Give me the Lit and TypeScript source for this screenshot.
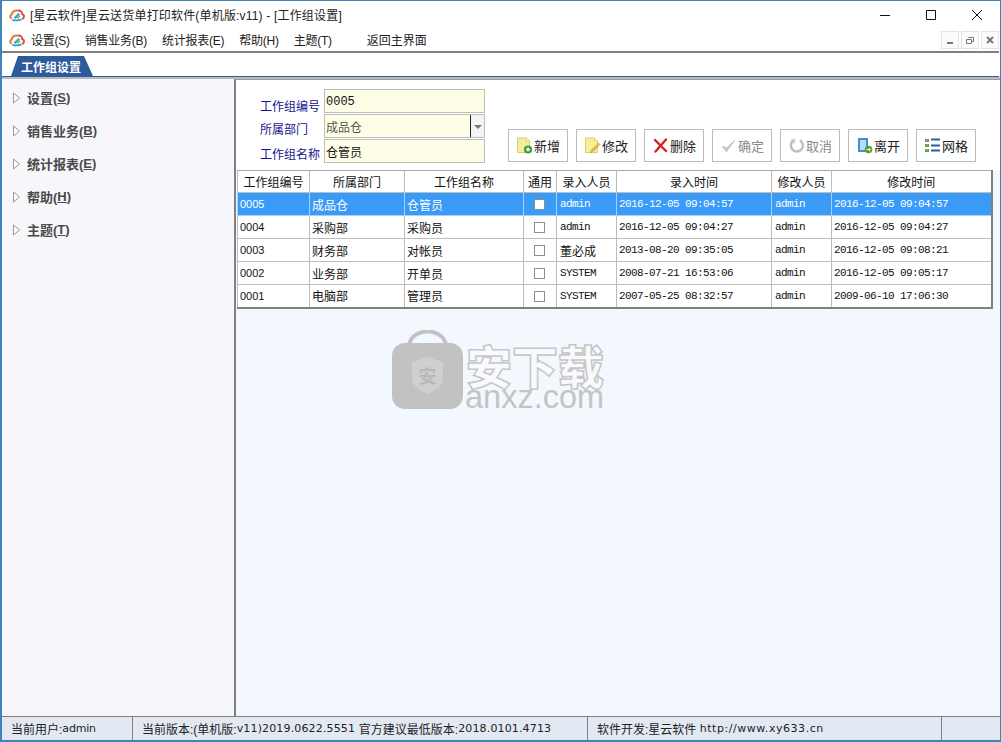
import { LitElement, html, css, svg } from 'lit';
import { customElement } from 'lit/decorators.js';

const logo = html`<svg class="logo" viewBox="0 0 16 14" width="16" height="14">
  <path d="M3 10.5C.8 10 .6 7.2 2.6 6.6 3 3.6 6 1.8 8.6 2.8" fill="none" stroke="#e8762c" stroke-width="2"/>
  <path d="M8.6 2.8C11 2 13.2 3.8 13.2 6 15.6 6.6 15.6 10.2 13 10.8" fill="none" stroke="#d94f3a" stroke-width="2"/>
  <path d="M3.4 11.7C5.5 12.8 10 12.8 12.5 11.2" fill="none" stroke="#2f9bd8" stroke-width="1.8"/>
  <path d="M4.6 9.6 9.5 4.8 11 6.4 6.4 11z" fill="#3aa6dc"/>
  <path d="M7.6 10 10.6 7.2 11.6 8.4 9 10.8z" fill="#7cbf3f"/>
</svg>`;

const doc = svg`<path d="M1.5 1h9l3 3v11.5h-12z" fill="#f4ef9a" stroke="#dccf6a"/><path d="M10.5 1v3h3" fill="#fff" stroke="#dccf6a"/>`;

const icons: Record<string, unknown> = {
  add: html`<svg viewBox="0 0 17 17" width="17" height="17">${doc}<circle cx="12" cy="12.5" r="4" fill="#3c9a3c"/><path d="M10 12.5h4M12 10.5v4" stroke="#fff" stroke-width="1.4"/></svg>`,
  edit: html`<svg viewBox="0 0 17 17" width="17" height="17">${doc}<path d="M7 13.5 14.5 6l1.5 1.5L8.5 15l-2 .5z" fill="#e9b949" stroke="#b98a2a" stroke-width=".5"/></svg>`,
  del: html`<svg viewBox="0 0 17 17" width="17" height="17"><path d="M3 3l11 11M14 2.5 3.5 14.5" stroke="#d3201f" stroke-width="2.4" stroke-linecap="round"/></svg>`,
  ok: html`<svg viewBox="0 0 17 17" width="17" height="17"><path d="M2 9.5 6.5 15 15 3 7 10.5z" fill="#c9c9c9" stroke="#b8b8b8" stroke-width=".6"/></svg>`,
  cancel: html`<svg viewBox="0 0 17 17" width="17" height="17"><path d="M5.5 3.6A6 6 0 1 0 12 3.4" fill="none" stroke="#bdbdbd" stroke-width="2.4"/><path d="M2.5 2.5 7.5 2 6.6 7z" fill="#c9c9c9"/></svg>`,
  exit: html`<svg viewBox="0 0 17 17" width="17" height="17"><path d="M2 1h10v14H2z" fill="#3f8fd2"/><path d="M4 3h6v10H4z" fill="#b9dcf5"/><circle cx="12.5" cy="12.5" r="3.8" fill="#5aa32e"/><path d="M10.8 12.5h3.4M13 11l1.4 1.5L13 14" fill="none" stroke="#fff"/></svg>`,
  grid: html`<svg viewBox="0 0 17 17" width="17" height="17"><path d="M1 2h4v3H1zM1 7h4v3H1zM1 12h4v3H1z" fill="#6f9a3c"/><path d="M2 3h2M2 8h2M2 13h2" stroke="#8fb3d8"/><path d="M7 2.5h9M7 8.5h9M7 13.5h9" stroke="#2a5f9e" stroke-width="2"/></svg>`,
};

const menus = ['设置(S)', '销售业务(B)', '统计报表(E)', '帮助(H)', '主题(T)'];
const sideItems: [string, string][] = [['设置', 'S'], ['销售业务', 'B'], ['统计报表', 'E'], ['帮助', 'H'], ['主题', 'T']];
const buttons = [
  { icon: 'add', label: '新增' }, { icon: 'edit', label: '修改' }, { icon: 'del', label: '删除' },
  { icon: 'ok', label: '确定', off: true }, { icon: 'cancel', label: '取消', off: true },
  { icon: 'exit', label: '离开' }, { icon: 'grid', label: '网格' },
];
const heads = ['工作组编号', '所属部门', '工作组名称', '通用', '录入人员', '录入时间', '修改人员', '修改时间'];
const rows = [
  ['0005', '成品仓', '仓管员', 'admin', '2016-12-05 09:04:57', 'admin', '2016-12-05 09:04:57'],
  ['0004', '采购部', '采购员', 'admin', '2016-12-05 09:04:27', 'admin', '2016-12-05 09:04:27'],
  ['0003', '财务部', '对帐员', '董必成', '2013-08-20 09:35:05', 'admin', '2016-12-05 09:08:21'],
  ['0002', '业务部', '开单员', 'SYSTEM', '2008-07-21 16:53:06', 'admin', '2016-12-05 09:05:17'],
  ['0001', '电脑部', '管理员', 'SYSTEM', '2007-05-25 08:32:57', 'admin', '2009-06-10 17:06:30'],
];

@customElement('app-root')
export class AppRoot extends LitElement {
  static styles = css`
    :host {
      display: flex;
      flex-direction: column;
      width: 1001px;
      height: 742px;
      box-sizing: border-box;
      background: #fff;
      border: 1px solid #3f83b8;
      border-left-width: 2px;
      border-bottom-width: 2px;
      font: 12px 'Liberation Sans', 'Noto Sans CJK SC', sans-serif;
      color: #111;
      overflow: hidden;
    }
    .title { height: 27px; display: flex; align-items: center; padding-left: 7px; flex: none; }
    .logo { flex: none; }
    .title-text { margin-left: 5px; flex: 1; white-space: nowrap; color: #222; letter-spacing: .18px; }
    .caps { display: flex; align-items: center; height: 27px; }
    .cap { width: 46px; height: 27px; display: flex; align-items: center; justify-content: center; }
    .menu { height: 23px; display: flex; align-items: center; padding-left: 7px; flex: none; }
    .menu-item { margin-left: 15px; white-space: nowrap; color: #222; letter-spacing: -.25px; }
    .menu-item.first { margin-left: 6px; }
    .menu-item.back { margin-left: 35px; letter-spacing: 0; }
    .mdi { margin-left: auto; display: flex; gap: 2px; padding-right: 1px; }
    .mdi-btn { width: 16px; height: 16px; border: 1px solid #e4e4e4; display: flex; align-items: center; justify-content: center; background: #fbfbfb; }
    .tabs { flex: none; height: 23px; border-top: 2px solid #808080; border-bottom: 1px solid #2f5f9a; margin-right: 1px; padding-left: 9px; display: flex; align-items: flex-end; }
    .tab { width: 82px; height: 20px; box-sizing: border-box; padding-right: 2px; background: #2c5b9c; clip-path: polygon(7px 0, 73px 0, 82px 100%, 0 100%); color: #fff; font-size: 12px; font-weight: 700; display: flex; align-items: center; justify-content: center; }
    .body { flex: 1; display: flex; min-height: 0; border-top: 2px solid #b9b9b9; }
    .side { width: 229px; flex: none; background: #f7f6fb; padding-top: 2px; box-sizing: border-box; }
    .side-item { height: 33px; display: flex; align-items: center; padding-left: 10px; color: #4a4a4a; font-weight: 700; font-size: 13px; white-space: pre; }
    .side-item u { text-underline-offset: 1px; }
    .side-item svg { margin-right: 6px; }
    .side-gap { width: 3px; flex: none; background: #f7f6fb; }
    .main { flex: 1; position: relative; background: #f3f8fe; border-left: 2px solid #808080; border-top: 1px solid #9a9a9a; display: flex; flex-direction: column; min-width: 0; }
    .top { height: 90px; flex: none; background: #fff; display: flex; box-sizing: border-box; padding: 9px 0 0 24px; }
    .form { display: grid; grid-template-columns: 60px 161px; column-gap: 4px; row-gap: 1px; grid-auto-rows: 24px; }
    .lbl { color: #14148c; white-space: nowrap; display: flex; align-items: flex-end; padding-bottom: 1px; }
    .lbl.low { padding-bottom: 0; margin-bottom: -1px; }
    .inp { background: #fefee6; border: 1px solid #bdbdbd; box-sizing: border-box; padding-left: 1px; display: flex; align-items: center; color: #111; }
    .inp.num { font-family: 'Liberation Mono', monospace; padding-top: 2px; }
    .combo { color: #555; background: linear-gradient(#fefee6, #fefee6) left / 146px 100% no-repeat, #f4f4f4; position: relative; }
    .combo i { position: absolute; left: 145px; top: 0; bottom: 0; width: 1px; background: #222; }
    .combo b { position: absolute; left: 149px; top: 10px; border: 4px solid transparent; border-top: 4px solid #777; border-bottom: 0; }
    .btns { display: flex; gap: 8px; margin: 40px 0 0 23px; align-items: flex-start; }
    .btn { width: 60px; height: 33px; box-sizing: border-box; border: 1px solid #bdbdbd; background: #fff; display: flex; align-items: center; justify-content: center; gap: 1px; color: #222; font-size: 13px; }
    .btn.off { color: #8a8a8a; }
    table { border-collapse: collapse; table-layout: fixed; width: 754px; margin-left: 1px; background: #fff; border-right: 2px solid #808080; border-bottom: 2px solid #808080; position: relative; }
    th, td { box-sizing: border-box; border: 1px solid #bdbdbd; height: 23px; padding: 0 0 0 2px; font-weight: 400; white-space: nowrap; overflow: hidden; text-align: left; }
    th { text-align: center; padding: 0; height: 22px; border-top-color: #a8a8a8; }
    tr.sel td { background: #3a9bf6; color: #fff; border-color: #a9cff5; }
    .mono { font: 11px 'Liberation Mono', 'Noto Sans CJK SC', monospace; letter-spacing: -.6px; padding-left: 3px; }
    .mono.time { padding-left: 2px; }
    .mono.cjk { font: 12px 'Noto Sans CJK SC', sans-serif; letter-spacing: 0; }
    .code { font-size: 11px; }
    .chk { text-align: center; padding: 0; }
    .chk span { display: inline-block; width: 9px; height: 9px; border: 1px solid #8e8e8e; background: #fff; vertical-align: middle; margin-left: -1px; }
    .mark { position: absolute; left: 156px; top: 250px; width: 220px; height: 80px; pointer-events: none; }
    .mark-cn { position: absolute; left: 74px; top: 14px; font: 900 46px/41px 'Noto Sans CJK SC', sans-serif; color: #f8fafd; -webkit-text-stroke: 1.5px #c6c6c6; white-space: nowrap; }
    .mark-en { position: absolute; left: 73px; top: 56px; font: 32.5px/22px 'Liberation Sans', sans-serif; color: #c4c4c4; white-space: nowrap; }
    .mark-seal { font: 700 18px 'Noto Sans CJK SC', sans-serif; fill: #b8b8b8; }
    .status { height: 23px; flex: none; display: flex; background: #e3e9f2; border-top: 1px solid #808080; color: #222; }
    .cell { box-sizing: border-box; display: flex; align-items: center; padding-left: 9px; border-right: 1px solid #808080; white-space: pre; }
    .lat { font: 11px 'DejaVu Sans', sans-serif; letter-spacing: .15px; }
    .lat.tight { letter-spacing: -.2px; }
    .lat.url { letter-spacing: .55px; }
  `;

  render() {
    return html`
      <div class="title">
        ${logo}<span class="title-text">[星云软件]星云送货单打印软件(单机版:v11) - [工作组设置]</span>
        <div class="caps">
          <div class="cap"><svg width="12" height="12" viewBox="0 0 12 12"><path d="M1 6.5h10" stroke="#111"/></svg></div>
          <div class="cap"><svg width="12" height="12" viewBox="0 0 12 12"><path d="M1.5 1.5h9v9h-9z" fill="none" stroke="#111"/></svg></div>
          <div class="cap"><svg width="12" height="12" viewBox="0 0 12 12"><path d="M1 1l10 10M11 1 1 11" stroke="#111"/></svg></div>
        </div>
      </div>
      <div class="menu">
        ${logo}
        ${menus.map((m, i) => html`<span class="menu-item ${i === 0 ? 'first' : ''}">${m}</span>`)}
        <span class="menu-item back">返回主界面</span>
        <div class="mdi">
          <div class="mdi-btn"><svg width="10" height="10" viewBox="0 0 10 10"><path d="M2 8h6" stroke="#777" stroke-width="2"/></svg></div>
          <div class="mdi-btn"><svg width="10" height="10" viewBox="0 0 10 10"><path d="M3.5 2.5h5v4h-2M1.5 4.5h5v4h-5z" fill="none" stroke="#777"/></svg></div>
          <div class="mdi-btn"><svg width="10" height="10" viewBox="0 0 10 10"><path d="M2 2l6 6M8 2 2 8" stroke="#777" stroke-width="2"/></svg></div>
        </div>
      </div>
      <div class="tabs"><div class="tab">工作组设置</div></div>
      <div class="body">
        <div class="side">
          ${sideItems.map(([t, k]) => html`<div class="side-item"><svg width="9" height="12" viewBox="0 0 9 12"><path d="M1.5 1v10l6-5z" fill="#fff" stroke="#999"/></svg>${t}(<u>${k}</u>)</div>`)}
        </div>
        <div class="side-gap"></div>
        <div class="main">
          <div class="top">
            <div class="form">
              <span class="lbl low">工作组编号</span><div class="inp num">0005</div>
              <span class="lbl">所属部门</span><div class="inp combo">成品仓<i></i><b></b></div>
              <span class="lbl">工作组名称</span><div class="inp">仓管员</div>
            </div>
            <div class="btns">
              ${buttons.map(b => html`<div class="btn ${b.off ? 'off' : ''}">${icons[b.icon]}${b.label}</div>`)}
            </div>
          </div>
          <table>
            <colgroup>
              ${[72, 95, 119, 33, 60, 155, 60, 160].map(w => html`<col style="width:${w}px">`)}
            </colgroup>
            <thead><tr>${heads.map(h => html`<th>${h}</th>`)}</tr></thead>
            <tbody>
              ${rows.map((r, i) => html`<tr class="${i === 0 ? 'sel' : ''}">
                <td class="code">${r[0]}</td><td>${r[1]}</td><td>${r[2]}</td>
                <td class="chk"><span></span></td>
                <td class="mono ${r[3] === '董必成' ? 'cjk' : ''}">${r[3]}</td>
                <td class="mono time">${r[4]}</td><td class="mono">${r[5]}</td><td class="mono time">${r[6]}</td>
              </tr>`)}
            </tbody>
          </table>
          <div class="mark">
            <svg width="72" height="80" viewBox="0 0 72 80">
              <path d="M17 15C20 -3 51 -3 54 15" fill="none" stroke="#c2c2c2" stroke-width="4"/>
              <rect x="0" y="13" width="71" height="66" rx="13" fill="#c2c2c2"/>
              <path d="M35.5 27 51 32V48C51 56 43 61 35.5 64 28 61 20 56 20 48V32z" fill="#cfcfcf"/>
              <text class="mark-seal" x="35.5" y="53" text-anchor="middle">安</text>
            </svg>
            <div class="mark-cn">安下载</div>
            <div class="mark-en">anxz.com</div>
          </div>
        </div>
      </div>
      <div class="status">
        <div class="cell" style="width:131px">当前用户:<span class="lat tight">admin</span></div>
        <div class="cell" style="width:455px">当前版本:(单机版:<span class="lat">v11)2019.0622.5551 </span>官方建议最低版本:<span class="lat">2018.0101.4713</span></div>
        <div class="cell" style="width:354px">软件开发:星云软件 <span class="lat url">http://www.xy633.cn</span></div>
      </div>
    `;
  }
}
